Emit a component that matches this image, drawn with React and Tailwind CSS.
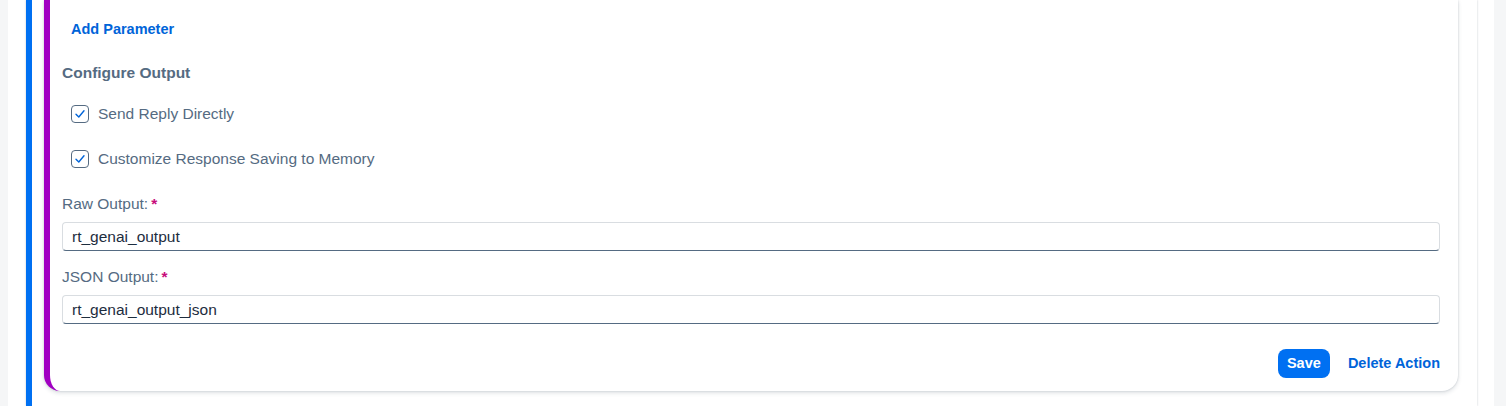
function CheckRow({ label, className }) {
  return (
    <div className={`flex h-8 items-center pl-[9px] ${className}`}>
      <span className="flex h-[18px] w-[18px] items-center justify-center rounded-[4px] border border-[#556b82] bg-white">
        <svg width="14" height="14" viewBox="0 0 14 14" fill="none">
          <path d="M3 7.2 L5.8 10 L11 3.8" stroke="#0064d9" strokeWidth="1.4" strokeLinecap="round" strokeLinejoin="round" />
        </svg>
      </span>
      <span className="ml-[9px] text-[15.5px] text-[#556b82]">{label}</span>
    </div>
  );
}

function Field({ label, value, className }) {
  return (
    <>
      <div className={`flex h-6 items-center text-[15.5px] text-[#556b82] ${className}`}>
        {label}
        <span className="ml-[3px] font-bold text-[#c70d7c]">*</span>
      </div>
      <div className="mt-[6px] flex h-[29px] items-center rounded-[4px] border border-[#d9dde1] border-b-[#556b82] bg-white px-[9px] text-[15.5px] text-[#1d2d3e]">
        {value}
      </div>
    </>
  );
}

export default function App() {
  return (
    <div className="min-h-screen bg-[#f5f6f7] pl-2 pr-3 font-['Liberation_Sans',Arial,sans-serif]">
      <div className="min-h-[406px] bg-white pl-[18px] pr-[17px]">
        <div className="min-h-[406px] border-l-[6px] border-[#0070f2] bg-white pl-3 pr-[19px] shadow-[0_0_2px_rgba(34,53,72,0.25)]">
          <div className="rounded-b-2xl border-l-[6px] border-[#a100c2] bg-white pt-[14px] pb-[13px] pl-3 pr-[18px] shadow-[0_0_2px_rgba(34,53,72,0.2),0_2px_4px_rgba(34,53,72,0.15)]">
            <div className="flex h-8 items-center pl-[9px]">
              <span className="text-[14.5px] font-bold text-[#0064d9]">Add Parameter</span>
            </div>
            <div className="mt-[15px] flex h-6 items-center text-[15.5px] font-bold text-[#556b82]">
              Configure Output
            </div>
            <CheckRow label="Send Reply Directly" className="mt-[13px]" />
            <CheckRow label="Customize Response Saving to Memory" className="mt-[13px]" />
            <Field label="Raw Output:" value="rt_genai_output" className="mt-[17px]" />
            <Field label="JSON Output:" value="rt_genai_output_json" className="mt-[14px]" />
            <div className="mt-[25px] flex h-[29px] items-center justify-end gap-[18px]">
              <button className="h-[29px] w-[52px] rounded-lg bg-[#0070f2] text-[14.5px] font-bold text-white">
                Save
              </button>
              <span className="text-[14.5px] font-bold text-[#0064d9]">Delete Action</span>
            </div>
          </div>
        </div>
      </div>
    </div>
  );
}
